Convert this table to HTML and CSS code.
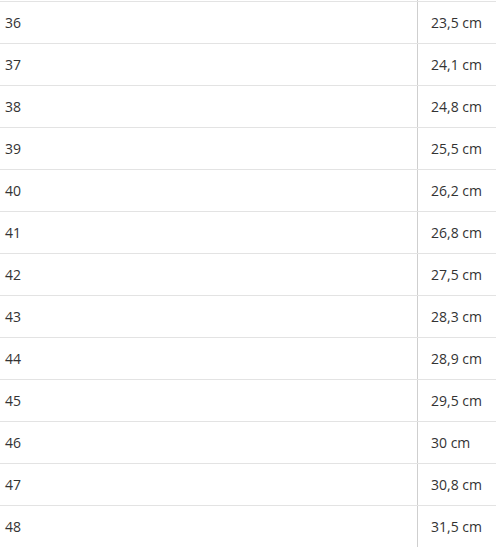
FILE: index.html
```html
<!DOCTYPE html>
<html>
<head>
<meta charset="utf-8">
<link rel="stylesheet" href="styles.css">
</head>
<body>
<div class="table">
  <div class="row stub"><div class="c1"></div><div class="c2"></div></div>
  <div class="row"><div class="c1">36</div><div class="c2">23,5 cm</div></div>
  <div class="row"><div class="c1">37</div><div class="c2">24,1 cm</div></div>
  <div class="row"><div class="c1">38</div><div class="c2">24,8 cm</div></div>
  <div class="row"><div class="c1">39</div><div class="c2">25,5 cm</div></div>
  <div class="row"><div class="c1">40</div><div class="c2">26,2 cm</div></div>
  <div class="row"><div class="c1">41</div><div class="c2">26,8 cm</div></div>
  <div class="row"><div class="c1">42</div><div class="c2">27,5 cm</div></div>
  <div class="row"><div class="c1">43</div><div class="c2">28,3 cm</div></div>
  <div class="row"><div class="c1">44</div><div class="c2">28,9 cm</div></div>
  <div class="row"><div class="c1">45</div><div class="c2">29,5 cm</div></div>
  <div class="row"><div class="c1">46</div><div class="c2">30 cm</div></div>
  <div class="row"><div class="c1">47</div><div class="c2">30,8 cm</div></div>
  <div class="row"><div class="c1">48</div><div class="c2">31,5 cm</div></div>
</div>
</body>
</html>
```
FILE: styles.css
```css
html, body {
  margin: 0;
  padding: 0;
  background: #fff;
}
body {
  font-family: "Open Sans", "Liberation Sans", sans-serif;
  font-size: 14px;
  color: #333;
}
.table {
  display: flex;
  flex-direction: column;
  width: 496px;
}
.row {
  display: flex;
  height: 41px;
  border-top: 1px solid #e3e3e3;
}
.row.stub {
  height: 1px;
  border-top: none;
}
.c1 {
  width: 412px;
  padding-left: 5px;
  display: flex;
  align-items: center;
}
.c2 {
  flex: 1;
  border-left: 1px solid #cfcfcf;
  padding-left: 13px;
  display: flex;
  align-items: center;
}
```
